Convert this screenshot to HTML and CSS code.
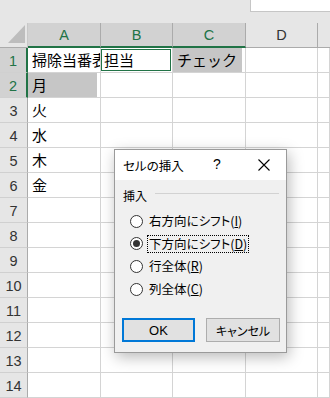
FILE: index.html
```html
<!DOCTYPE html>
<html lang="ja">
<head>
<meta charset="utf-8">
<link rel="stylesheet" href="styles.css">
</head>
<body>
<div class="top"><div class="namebox"></div></div>
<div class="sheet">
  <div class="hd corner"><svg width="28" height="25" viewBox="0 0 28 25"><polygon points="25,2 25,20 8,20" fill="#bdbdbd"/></svg></div>
  <div class="hd col sel">A</div>
  <div class="hd col sel">B</div>
  <div class="hd col sel">C</div>
  <div class="hd col">D</div>
  <div class="hd col last"></div>

  <div class="hd row sel">1</div>
  <div class="c clip">掃除当番表</div>
  <div class="c"><div class="active">担当</div></div>
  <div class="c"><div class="shade">チェック</div></div>
  <div class="c"></div>
  <div class="c"></div>

  <div class="hd row sel">2</div>
  <div class="c"><div class="shade">月</div></div>
  <div class="c"></div>
  <div class="c"></div>
  <div class="c"></div>
  <div class="c"></div>

  <div class="hd row">3</div><div class="c">火</div><div class="c"></div><div class="c"></div><div class="c"></div><div class="c"></div>
  <div class="hd row">4</div><div class="c">水</div><div class="c"></div><div class="c"></div><div class="c"></div><div class="c"></div>
  <div class="hd row">5</div><div class="c">木</div><div class="c"></div><div class="c"></div><div class="c"></div><div class="c"></div>
  <div class="hd row">6</div><div class="c">金</div><div class="c"></div><div class="c"></div><div class="c"></div><div class="c"></div>
  <div class="hd row">7</div><div class="c"></div><div class="c"></div><div class="c"></div><div class="c"></div><div class="c"></div>
  <div class="hd row">8</div><div class="c"></div><div class="c"></div><div class="c"></div><div class="c"></div><div class="c"></div>
  <div class="hd row">9</div><div class="c"></div><div class="c"></div><div class="c"></div><div class="c"></div><div class="c"></div>
  <div class="hd row">10</div><div class="c"></div><div class="c"></div><div class="c"></div><div class="c"></div><div class="c"></div>
  <div class="hd row">11</div><div class="c"></div><div class="c"></div><div class="c"></div><div class="c"></div><div class="c"></div>
  <div class="hd row">12</div><div class="c"></div><div class="c"></div><div class="c"></div><div class="c"></div><div class="c"></div>
  <div class="hd row">13</div><div class="c"></div><div class="c"></div><div class="c"></div><div class="c"></div><div class="c"></div>
  <div class="hd row">14</div><div class="c"></div><div class="c"></div><div class="c"></div><div class="c"></div><div class="c"></div>
</div>

<div class="dialog">
  <div class="titlebar">
    <span class="title">セルの挿入</span>
    <span class="help">?</span>
    <svg class="close" width="12" height="12" viewBox="0 0 12 12"><path d="M0.5 0.5 L11.5 11.5 M11.5 0.5 L0.5 11.5" stroke="#000" stroke-width="1.1" fill="none"/></svg>
  </div>
  <div class="body">
    <div class="group"><span>挿入</span><div class="rule"></div></div>
    <div class="radios">
      <div class="opt"><span class="radio"></span><span class="lbl">右方向にシフト(<u>I</u>)</span></div>
      <div class="opt"><span class="radio on"></span><span class="lbl focus">下方向にシフト(<u>D</u>)</span></div>
      <div class="opt"><span class="radio"></span><span class="lbl">行全体(<u>R</u>)</span></div>
      <div class="opt"><span class="radio"></span><span class="lbl">列全体(<u>C</u>)</span></div>
    </div>
    <div class="buttons">
      <div class="btn ok">OK</div>
      <div class="btn">キャンセル</div>
    </div>
  </div>
</div>
</body>
</html>
```
FILE: styles.css
```css
html, body { margin: 0; padding: 0; }
body {
  width: 330px;
  height: 398px;
  overflow: hidden;
  background: #fff;
  position: relative;
  font-family: "Noto Sans CJK JP", "Liberation Sans", sans-serif;
}
.top {
  height: 23px;
  background: #e6e6e6;
  position: relative;
}
.namebox {
  position: absolute;
  left: 250px;
  top: 0;
  width: 90px;
  height: 11px;
  background: #fff;
  border: 1px solid #c6c6c6;
  border-top: none;
}
.sheet {
  display: grid;
  grid-template-columns: 28px 73px 72px 73px 72px 1fr;
  grid-auto-rows: 25px;
}
.sheet > div { box-sizing: border-box; }
.hd {
  background: #e6e6e6;
  font-family: "Liberation Sans", sans-serif;
  font-size: 14.5px;
  color: #333;
  display: flex;
  align-items: center;
  justify-content: center;
  border-right: 1px solid #ababab;
  border-bottom: 1px solid #ababab;
}
.corner { border-right: 1px solid #c8c8c8; padding: 0; display: block; }
.corner svg { display: block; }
.col.sel { background: #d2d2d2; color: #217346; border-bottom: 2px solid #217346; }
.col.last { border-right: none; }
.row { border-bottom-color: #d0d0d0; padding-top: 1px; }
.row.sel { background: #d2d2d2; color: #217346; border-right: 2px solid #217346; }
.c {
  border-right: 1px solid #d4d4d4;
  border-bottom: 1px solid #d4d4d4;
  font-size: 15px;
  line-height: 24px;
  padding-left: 4px;
  color: #000;
  white-space: nowrap;
  overflow: hidden;
  position: relative;
}
.clip { padding-left: 4px; }
.c:has(.active), .c:has(.shade) { padding: 0; }
.active {
  margin: 1px 1px 1px 0;
  height: 22px;
  box-sizing: border-box;
  border: 1px solid #217346;
  line-height: 20px;
  padding-left: 2px;
}
.shade {
  background: #c6c6c6;
  height: 24px;
  margin-right: 3px;
  padding-left: 4px;
  line-height: 24px;
}
.dialog {
  position: absolute;
  left: 114px;
  top: 149px;
  width: 173px;
  height: 204px;
  box-sizing: border-box;
  border: 1px solid #9a9a9a;
  background: #f0f0f0;
  box-shadow: 2px 4px 14px rgba(0,0,0,0.28);
  font-size: 12px;
  font-feature-settings: "palt";
  color: #000;
}
.titlebar {
  height: 30px;
  background: #fff;
  display: flex;
  align-items: center;
  padding-left: 8px;
  position: relative;
}
.title { font-size: 12.5px; }
.help {
  position: absolute;
  left: 98px;
  top: 6px;
  font-family: "Liberation Sans", sans-serif;
  font-size: 14px;
}
.close { position: absolute; left: 143px; top: 9px; }
.body { padding: 6px 0 0 8px; }
.group { display: flex; align-items: center; height: 18px; }
.rule { flex: 1; height: 1px; background: #d2d2d2; margin: -3px 7px 0 8px; }
.radios { margin-top: 6px; padding-left: 7px; display: flex; flex-direction: column; gap: 0.7px; }
.opt { height: 22px; display: flex; align-items: center; }
.radio {
  width: 13px; height: 13px; box-sizing: border-box;
  border: 1px solid #333; border-radius: 50%; background: #fff;
  margin-right: 4px; position: relative; flex: none;
}
.radio.on::after {
  content: ""; position: absolute; left: 2px; top: 2px;
  width: 7px; height: 7px; border-radius: 50%; background: #333;
}
.lbl { padding: 0 1px; line-height: 16px; border: 1px dotted transparent; font-size: 12.5px; }
.lbl u { text-decoration: underline; text-underline-offset: 1px; }
.focus { border-color: #000; }
.buttons { display: flex; gap: 11px; margin-top: 18px; margin-left: -1px; }
.btn {
  width: 74px; height: 24px; box-sizing: border-box;
  border: 1px solid #adadad; background: #e1e1e1;
  display: flex; align-items: center; justify-content: center;
}
.ok { width: 73px; border: 2px solid #0078d7; font-family: "Liberation Sans", sans-serif; font-size: 13px; }
```
